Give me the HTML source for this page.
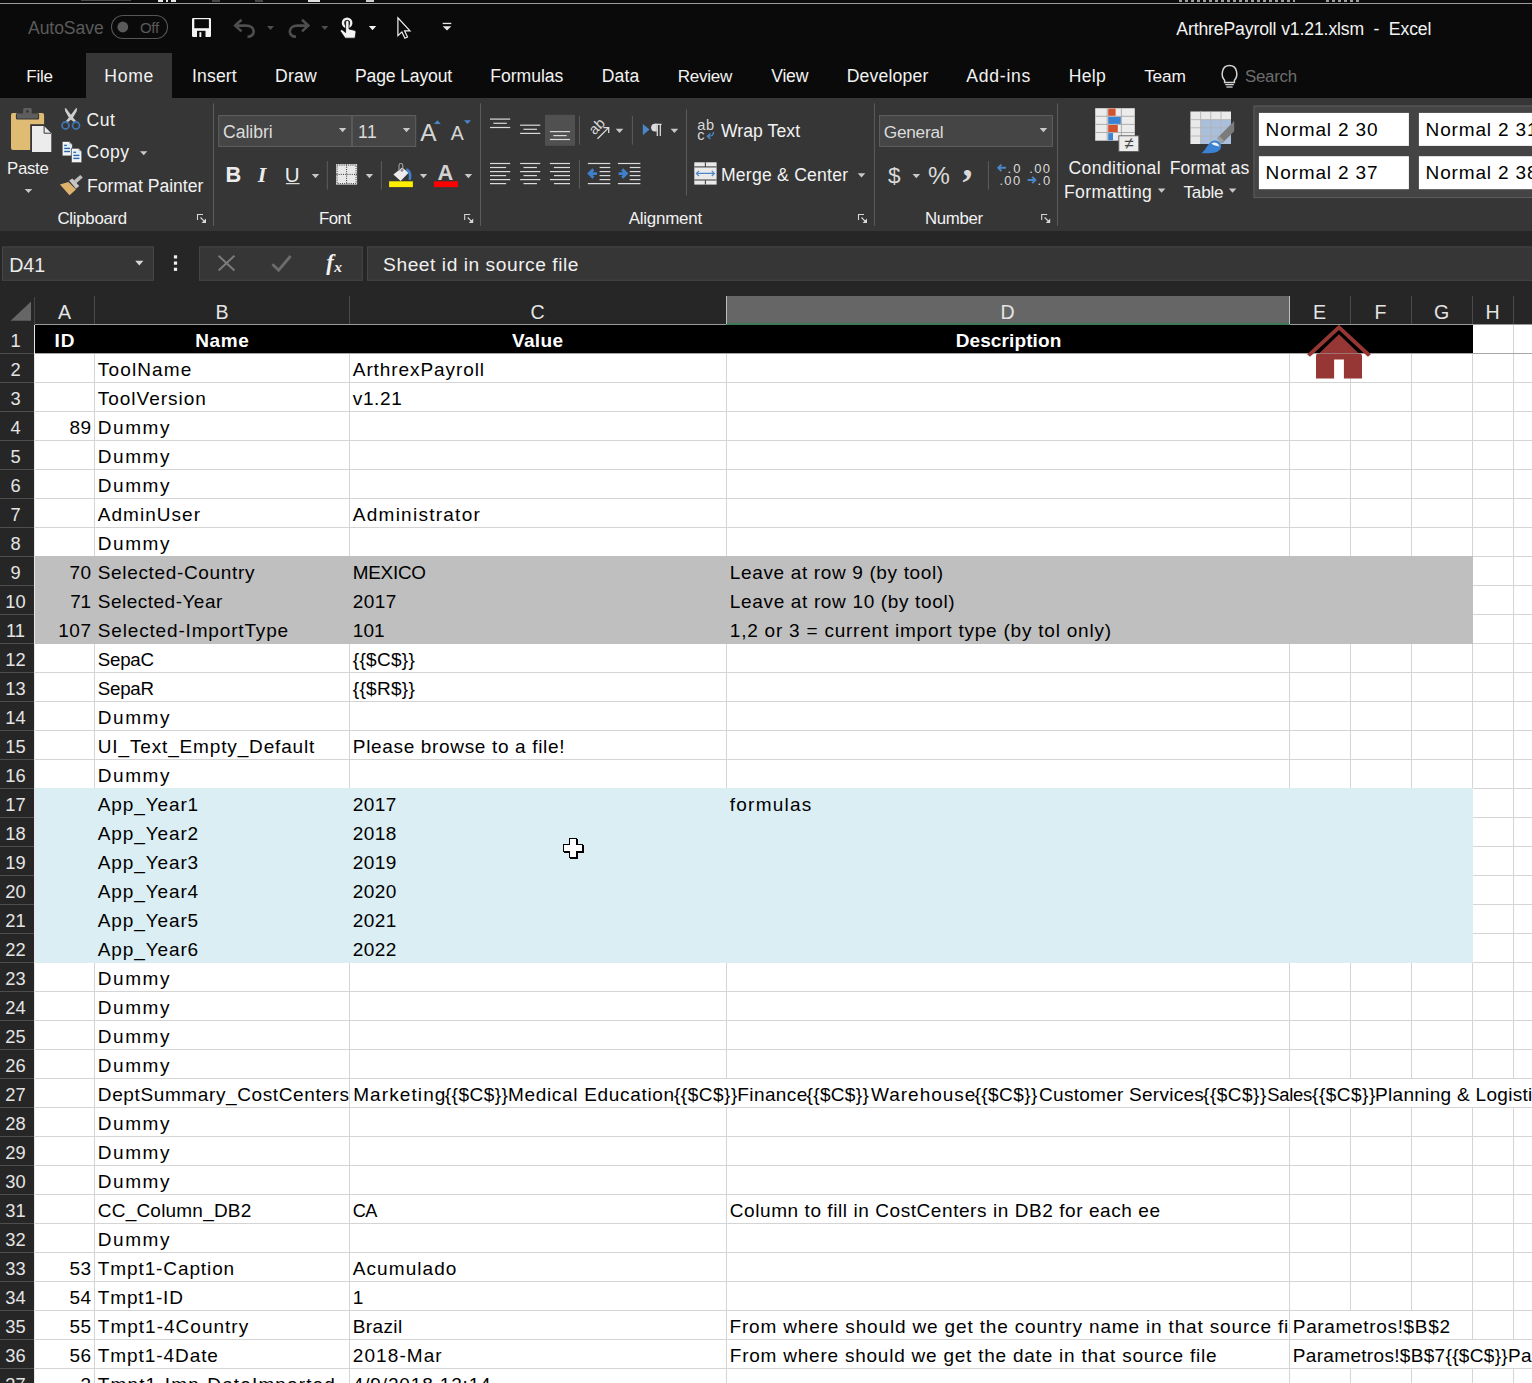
<!DOCTYPE html>
<html><head><meta charset="utf-8"><title>ArthrePayroll v1.21.xlsm - Excel</title>
<style>
html,body{margin:0;padding:0;background:#0a0a0a;}
body{width:1532px;height:1383px;overflow:hidden;position:relative;font-family:"Liberation Sans",sans-serif;}
#r{position:absolute;left:0;top:0;width:1532px;height:1383px;overflow:hidden;}
#r div,#r span,#r svg{position:absolute;}
#r span{white-space:pre;}
</style></head>
<body><div id="r">
<div style="left:0px;top:0px;width:1532px;height:3px;background:#0b0b0b;"></div>
<div style="left:0px;top:3px;width:1532px;height:1px;background:#9c9c9c;"></div>
<div style="left:1179px;top:0px;width:116px;height:2px;background:repeating-linear-gradient(90deg,#cfcfcf 0 3px,#0b0b0b 3px 6px);opacity:.75;"></div>
<div style="left:1326px;top:0px;width:36px;height:2px;background:repeating-linear-gradient(90deg,#cfcfcf 0 3px,#0b0b0b 3px 6px);opacity:.75;"></div>
<div style="left:81px;top:0px;width:50px;height:1px;background:#4a4a4a;"></div>
<div style="left:158px;top:0px;width:18px;height:2px;background:#e8e8e8;"></div>
<div style="left:163px;top:0px;width:3px;height:2px;background:#0b0b0b;"></div>
<div style="left:168px;top:0px;width:3px;height:2px;background:#0b0b0b;"></div>
<div style="left:212px;top:0px;width:8px;height:2px;background:#454545;"></div>
<div style="left:255px;top:0px;width:8px;height:2px;background:#454545;"></div>
<div style="left:308px;top:0px;width:12px;height:2px;background:#e0e0e0;"></div>
<div style="left:366px;top:0px;width:8px;height:2px;background:#d0d0d0;"></div>
<div style="left:0px;top:4px;width:1532px;height:94px;background:#0a0a0a;"></div>
<div style="left:86px;top:53px;width:86px;height:45px;background:#363636;"></div>
<div style="left:0px;top:98px;width:1532px;height:133px;background:#363636;"></div>
<div style="left:0px;top:231px;width:1532px;height:66px;background:#262626;"></div>
<div style="left:0px;top:297px;width:1532px;height:1086px;background:#262626;"></div>
<div style="left:35px;top:325px;width:1497px;height:1058px;background:#ffffff;"></div>
<div style="left:35px;top:353px;width:1497px;height:1px;background:#d4d4d4;"></div>
<div style="left:35px;top:382px;width:1497px;height:1px;background:#d4d4d4;"></div>
<div style="left:35px;top:411px;width:1497px;height:1px;background:#d4d4d4;"></div>
<div style="left:35px;top:440px;width:1497px;height:1px;background:#d4d4d4;"></div>
<div style="left:35px;top:469px;width:1497px;height:1px;background:#d4d4d4;"></div>
<div style="left:35px;top:498px;width:1497px;height:1px;background:#d4d4d4;"></div>
<div style="left:35px;top:527px;width:1497px;height:1px;background:#d4d4d4;"></div>
<div style="left:35px;top:556px;width:1497px;height:1px;background:#d4d4d4;"></div>
<div style="left:35px;top:585px;width:1497px;height:1px;background:#d4d4d4;"></div>
<div style="left:35px;top:614px;width:1497px;height:1px;background:#d4d4d4;"></div>
<div style="left:35px;top:643px;width:1497px;height:1px;background:#d4d4d4;"></div>
<div style="left:35px;top:672px;width:1497px;height:1px;background:#d4d4d4;"></div>
<div style="left:35px;top:701px;width:1497px;height:1px;background:#d4d4d4;"></div>
<div style="left:35px;top:730px;width:1497px;height:1px;background:#d4d4d4;"></div>
<div style="left:35px;top:759px;width:1497px;height:1px;background:#d4d4d4;"></div>
<div style="left:35px;top:788px;width:1497px;height:1px;background:#d4d4d4;"></div>
<div style="left:35px;top:817px;width:1497px;height:1px;background:#d4d4d4;"></div>
<div style="left:35px;top:846px;width:1497px;height:1px;background:#d4d4d4;"></div>
<div style="left:35px;top:875px;width:1497px;height:1px;background:#d4d4d4;"></div>
<div style="left:35px;top:904px;width:1497px;height:1px;background:#d4d4d4;"></div>
<div style="left:35px;top:933px;width:1497px;height:1px;background:#d4d4d4;"></div>
<div style="left:35px;top:962px;width:1497px;height:1px;background:#d4d4d4;"></div>
<div style="left:35px;top:991px;width:1497px;height:1px;background:#d4d4d4;"></div>
<div style="left:35px;top:1020px;width:1497px;height:1px;background:#d4d4d4;"></div>
<div style="left:35px;top:1049px;width:1497px;height:1px;background:#d4d4d4;"></div>
<div style="left:35px;top:1078px;width:1497px;height:1px;background:#d4d4d4;"></div>
<div style="left:35px;top:1107px;width:1497px;height:1px;background:#d4d4d4;"></div>
<div style="left:35px;top:1136px;width:1497px;height:1px;background:#d4d4d4;"></div>
<div style="left:35px;top:1165px;width:1497px;height:1px;background:#d4d4d4;"></div>
<div style="left:35px;top:1194px;width:1497px;height:1px;background:#d4d4d4;"></div>
<div style="left:35px;top:1223px;width:1497px;height:1px;background:#d4d4d4;"></div>
<div style="left:35px;top:1252px;width:1497px;height:1px;background:#d4d4d4;"></div>
<div style="left:35px;top:1281px;width:1497px;height:1px;background:#d4d4d4;"></div>
<div style="left:35px;top:1310px;width:1497px;height:1px;background:#d4d4d4;"></div>
<div style="left:35px;top:1339px;width:1497px;height:1px;background:#d4d4d4;"></div>
<div style="left:35px;top:1368px;width:1497px;height:1px;background:#d4d4d4;"></div>
<div style="left:94px;top:325px;width:1px;height:1058px;background:#d4d4d4;"></div>
<div style="left:349px;top:325px;width:1px;height:1058px;background:#d4d4d4;"></div>
<div style="left:726px;top:325px;width:1px;height:1058px;background:#d4d4d4;"></div>
<div style="left:1289px;top:325px;width:1px;height:1058px;background:#d4d4d4;"></div>
<div style="left:1350px;top:325px;width:1px;height:1058px;background:#d4d4d4;"></div>
<div style="left:1411px;top:325px;width:1px;height:1058px;background:#d4d4d4;"></div>
<div style="left:1472px;top:325px;width:1px;height:1058px;background:#d4d4d4;"></div>
<div style="left:1513px;top:325px;width:1px;height:1058px;background:#d4d4d4;"></div>
<div style="left:35px;top:353px;width:1497px;height:1px;background:#a6a6a6;"></div>
<div style="left:35px;top:325px;width:1438px;height:28px;background:#000000;"></div>
<div style="left:35px;top:556px;width:1438px;height:88px;background:#bfbfbf;"></div>
<div style="left:35px;top:788px;width:1438px;height:175px;background:#daeef3;"></div>
<div style="left:726px;top:1079px;width:806px;height:28px;background:#ffffff;"></div>
<div style="left:1350px;top:1311px;width:122px;height:28px;background:#ffffff;"></div>
<div style="left:1350px;top:1340px;width:182px;height:28px;background:#ffffff;"></div>
<div style="left:0px;top:297px;width:34px;height:1086px;background:#262626;"></div>
<div style="left:34px;top:325px;width:1px;height:1058px;background:#e6e6e6;"></div>
<div style="left:0px;top:353px;width:34px;height:1px;background:#4d4d4d;"></div>
<div style="left:0px;top:382px;width:34px;height:1px;background:#4d4d4d;"></div>
<div style="left:0px;top:411px;width:34px;height:1px;background:#4d4d4d;"></div>
<div style="left:0px;top:440px;width:34px;height:1px;background:#4d4d4d;"></div>
<div style="left:0px;top:469px;width:34px;height:1px;background:#4d4d4d;"></div>
<div style="left:0px;top:498px;width:34px;height:1px;background:#4d4d4d;"></div>
<div style="left:0px;top:527px;width:34px;height:1px;background:#4d4d4d;"></div>
<div style="left:0px;top:556px;width:34px;height:1px;background:#4d4d4d;"></div>
<div style="left:0px;top:585px;width:34px;height:1px;background:#4d4d4d;"></div>
<div style="left:0px;top:614px;width:34px;height:1px;background:#4d4d4d;"></div>
<div style="left:0px;top:643px;width:34px;height:1px;background:#4d4d4d;"></div>
<div style="left:0px;top:672px;width:34px;height:1px;background:#4d4d4d;"></div>
<div style="left:0px;top:701px;width:34px;height:1px;background:#4d4d4d;"></div>
<div style="left:0px;top:730px;width:34px;height:1px;background:#4d4d4d;"></div>
<div style="left:0px;top:759px;width:34px;height:1px;background:#4d4d4d;"></div>
<div style="left:0px;top:788px;width:34px;height:1px;background:#4d4d4d;"></div>
<div style="left:0px;top:817px;width:34px;height:1px;background:#4d4d4d;"></div>
<div style="left:0px;top:846px;width:34px;height:1px;background:#4d4d4d;"></div>
<div style="left:0px;top:875px;width:34px;height:1px;background:#4d4d4d;"></div>
<div style="left:0px;top:904px;width:34px;height:1px;background:#4d4d4d;"></div>
<div style="left:0px;top:933px;width:34px;height:1px;background:#4d4d4d;"></div>
<div style="left:0px;top:962px;width:34px;height:1px;background:#4d4d4d;"></div>
<div style="left:0px;top:991px;width:34px;height:1px;background:#4d4d4d;"></div>
<div style="left:0px;top:1020px;width:34px;height:1px;background:#4d4d4d;"></div>
<div style="left:0px;top:1049px;width:34px;height:1px;background:#4d4d4d;"></div>
<div style="left:0px;top:1078px;width:34px;height:1px;background:#4d4d4d;"></div>
<div style="left:0px;top:1107px;width:34px;height:1px;background:#4d4d4d;"></div>
<div style="left:0px;top:1136px;width:34px;height:1px;background:#4d4d4d;"></div>
<div style="left:0px;top:1165px;width:34px;height:1px;background:#4d4d4d;"></div>
<div style="left:0px;top:1194px;width:34px;height:1px;background:#4d4d4d;"></div>
<div style="left:0px;top:1223px;width:34px;height:1px;background:#4d4d4d;"></div>
<div style="left:0px;top:1252px;width:34px;height:1px;background:#4d4d4d;"></div>
<div style="left:0px;top:1281px;width:34px;height:1px;background:#4d4d4d;"></div>
<div style="left:0px;top:1310px;width:34px;height:1px;background:#4d4d4d;"></div>
<div style="left:0px;top:1339px;width:34px;height:1px;background:#4d4d4d;"></div>
<div style="left:0px;top:1368px;width:34px;height:1px;background:#4d4d4d;"></div>
<div style="left:726px;top:296px;width:563px;height:28px;background:#666666;"></div>
<div style="left:34px;top:324px;width:1498px;height:1px;background:#9b9b9b;"></div>
<div style="left:726px;top:323px;width:564px;height:2px;background:#3d7a57;"></div>
<div style="left:34px;top:297px;width:1px;height:28px;background:#444444;"></div>
<div style="left:94px;top:296px;width:1px;height:28px;background:#4a4a4a;"></div>
<div style="left:349px;top:296px;width:1px;height:28px;background:#4a4a4a;"></div>
<div style="left:726px;top:296px;width:1px;height:28px;background:#bdbdbd;"></div>
<div style="left:1289px;top:296px;width:1px;height:28px;background:#bdbdbd;"></div>
<div style="left:1350px;top:296px;width:1px;height:28px;background:#4a4a4a;"></div>
<div style="left:1411px;top:296px;width:1px;height:28px;background:#4a4a4a;"></div>
<div style="left:1472px;top:296px;width:1px;height:28px;background:#4a4a4a;"></div>
<div style="left:1513px;top:296px;width:1px;height:28px;background:#4a4a4a;"></div>
<svg style="left:0;top:0" width="1532" height="1383" viewBox="0 0 1532 1383"><rect x="111.5" y="15.5" width="56" height="23" rx="11.5" fill="none" stroke="#565656" stroke-width="1.1"/><circle cx="122.8" cy="27" r="5.4" fill="#5a5a5a" stroke="none" stroke-width="1"/><rect x="192" y="18" width="19" height="19" fill="#f4f4f4" rx="1.2"/><rect x="194.3" y="19.2" width="14.6" height="9" fill="#0a0a0a" /><rect x="197" y="30.8" width="8.5" height="6.2" fill="#0a0a0a" /><rect x="199.4" y="32.2" width="1.9" height="4.8" fill="#f4f4f4" /><path d="M241.5,19.8 L235.2,25.6 L241.5,31.4" fill="none" stroke="#4e4e4e" stroke-width="2.6" /><path d="M235.8,25.6 H246 C256,25.6 256,36.6 247.5,36.8" fill="none" stroke="#4e4e4e" stroke-width="2.6" /><polygon points="267,26 274,26 270.5,30" fill="#4e4e4e" /><path d="M302,19.8 L308.3,25.6 L302,31.4" fill="none" stroke="#4e4e4e" stroke-width="2.6" /><path d="M307.7,25.6 H297.5 C287.5,25.6 287.5,36.6 296,36.8" fill="none" stroke="#4e4e4e" stroke-width="2.6" /><polygon points="321.3,26 328.3,26 324.8,30" fill="#4e4e4e" /><circle cx="347.1" cy="22.9" r="4.1" fill="none" stroke="#f0f0f0" stroke-width="2.5"/><path d="M345.6,22 a1.7,1.7 0 0 1 3.4,0 V29 l5.2,1.2 c1.6,0.4 1.9,1.4 1.7,2.6 L355,38.2 H345.2 L340.6,31.6 c-0.8,-1.4 0.9,-2.6 2.2,-1.4 L345.6,32.6 Z" fill="#f4f4f4" stroke="#0a0a0a" stroke-width="0.8" /><polygon points="368.8,26.1 376.2,26.1 372.5,30.3" fill="#f4f4f4" /><path d="M397.9,17.8 V35.6 L401.9,31.9 L404.9,38.2 L407.5,37 L404.6,30.9 H410 Z" fill="#0a0a0a" stroke="#f4f4f4" stroke-width="1.2" /><rect x="442.7" y="22.8" width="8.6" height="1.3" fill="#e8e8e8" /><polygon points="442.7,26.2 451.3,26.2 447.0,30.6" fill="#e8e8e8" /><path d="M1224.6,80.2 C1220.6,76 1221.4,65.6 1229.5,65.6 C1237.6,65.6 1238.4,76 1234.4,80.2 V82.6 H1224.6 Z" fill="none" stroke="#d4d4d4" stroke-width="1.5" /><line x1="1225.2" y1="84.6" x2="1233.8" y2="84.6" stroke="#d4d4d4" stroke-width="1.3" stroke-linecap="butt"/><line x1="1226.4" y1="87" x2="1232.6" y2="87" stroke="#d4d4d4" stroke-width="1.3" stroke-linecap="butt"/><rect x="11" y="112.9" width="33.1" height="37.1" fill="#e0bb73" rx="2"/><rect x="15.9" y="112.9" width="23.2" height="6.6" fill="#363636" rx="1.5"/><rect x="23.1" y="108" width="8.7" height="7" fill="#5e5e5e" rx="1.6"/><path d="M17,113.4 H38 V116.9 a1.5,1.5 0 0 1 -1.5,1.5 H18.5 a1.5,1.5 0 0 1 -1.5,-1.5 Z" fill="#5e5e5e" stroke="none" stroke-width="1" /><circle cx="27.4" cy="111.4" r="1.4" fill="#363636" stroke="none" stroke-width="1"/><rect x="30.2" y="124.2" width="23" height="29.4" fill="#363636" /><path d="M32,126 H44.1 L51.3,133.2 V151.9 H32 Z" fill="#ececec" stroke="none" stroke-width="1" /><path d="M44.1,126 V133.2 H51.3" fill="none" stroke="#363636" stroke-width="1" /><polygon points="24.7,189 32.3,189 28.5,193" fill="#c8c8c8" /><path d="M64.8,108.1 L66.2,108.4 L72.6,117 L76,121 L74.2,122.2 L69.4,118.6 L65.2,111.2 Z" fill="#cdcdcd" stroke="none" stroke-width="1" /><path d="M77.1,108.1 L75.7,108.4 L69.3,117 L65.9,121 L67.7,122.2 L72.5,118.6 L76.7,111.2 Z" fill="#cdcdcd" stroke="none" stroke-width="1" /><circle cx="65.5" cy="125.5" r="3.5" fill="none" stroke="#3f73ad" stroke-width="1.8"/><circle cx="76" cy="125.5" r="3.5" fill="none" stroke="#3f73ad" stroke-width="1.8"/><path d="M62.2,141.4 H69.0 L72.4,144.8 V155.9 H62.2 Z" fill="#f4f4f4" stroke="#363636" stroke-width="0.7" /><path d="M69.0,141.4 V144.8 H72.4 Z" fill="#b9b9b9" stroke="none" stroke-width="1" /><rect x="63.800000000000004" y="144.0" width="6.999999999999999" height="8.899999999999995" fill="#dcecfb" /><line x1="64.2" y1="145.4" x2="66.8" y2="145.4" stroke="#2f64a0" stroke-width="1.3" stroke-linecap="butt"/><line x1="64.2" y1="148.4" x2="70.0" y2="148.4" stroke="#2f64a0" stroke-width="1.3" stroke-linecap="butt"/><line x1="64.2" y1="151.5" x2="70.0" y2="151.5" stroke="#2f64a0" stroke-width="1.3" stroke-linecap="butt"/><path d="M71.4,148.3 H78.4 L81.80000000000001,151.70000000000002 V162.70000000000002 H71.4 Z" fill="#f4f4f4" stroke="#363636" stroke-width="0.7" /><path d="M78.4,148.3 V151.70000000000002 H81.80000000000001 Z" fill="#b9b9b9" stroke="none" stroke-width="1" /><rect x="73.0" y="150.9" width="7.2" height="8.899999999999995" fill="#dcecfb" /><line x1="73.4" y1="152.3" x2="76.0" y2="152.3" stroke="#2f64a0" stroke-width="1.3" stroke-linecap="butt"/><line x1="73.4" y1="155.4" x2="79.4" y2="155.4" stroke="#2f64a0" stroke-width="1.3" stroke-linecap="butt"/><line x1="73.4" y1="158.4" x2="79.4" y2="158.4" stroke="#2f64a0" stroke-width="1.3" stroke-linecap="butt"/><polygon points="140,151.3 147.4,151.3 143.7,155.3" fill="#c8c8c8" /><path d="M59.9,184.4 L68.4,181.9 L76,189.5 L69.5,195.3 Z" fill="#ddb26c" stroke="none" stroke-width="1" /><path d="M69.1,180.5 L72.4,178.6 L79.2,185.9 L76,188.8 Z" fill="#c6c6c6" stroke="none" stroke-width="1" /><path d="M73.8,180.4 L80.3,175 L82.8,177.6 L76.4,183.2 Z" fill="#bdbdbd" stroke="none" stroke-width="1" /><path d="M197.5,220 V214.5 H203" fill="none" stroke="#d8d8d8" stroke-width="1.1" /><path d="M200.5,217.5 L205.3,222.3" fill="none" stroke="#d8d8d8" stroke-width="1.2" /><polygon points="206,218.6 206,223 201.6,223" fill="#d8d8d8" /><rect x="213.0" y="103.3" width="1" height="122.39999999999999" fill="#5c5c5c" /><rect x="218.7" y="115.6" width="133" height="30.8" fill="#454545" stroke="#606060" stroke-width="1"/><rect x="352.3" y="115.6" width="63.4" height="30.8" fill="#454545" stroke="#606060" stroke-width="1"/><polygon points="338.9,128 346.29999999999995,128 342.59999999999997,132.2" fill="#c8c8c8" /><polygon points="402.8,128 410.2,128 406.5,132.2" fill="#c8c8c8" /><polygon points="434,124 440.8,124 437.4,120.2" fill="#4a86c8" /><polygon points="464,120.2 471,120.2 467.5,124" fill="#4a86c8" /><rect x="285.9" y="183.1" width="13.7" height="1.1" fill="#ececec" /><polygon points="311.8,174 319.2,174 315.5,178.2" fill="#c8c8c8" /><rect x="326.8" y="161.2" width="1" height="28.5" fill="#5c5c5c" /><rect x="336.1" y="164.1" width="21" height="20.5" fill="#e8e8e8" /><g stroke="#363636" stroke-width="1" stroke-dasharray="1,1.2"><line x1="346.6" y1="164.6" x2="346.6" y2="184.4"/><line x1="336.4" y1="174.4" x2="357" y2="174.4"/><rect x="337.1" y="165.1" width="19" height="18.5" fill="none"/></g><polygon points="365.7,174 373.09999999999997,174 369.4,178.2" fill="#c8c8c8" /><rect x="380.9" y="161.2" width="1" height="28.5" fill="#5c5c5c" /><rect x="389.1" y="181.3" width="23.8" height="5.8" fill="#ffee00" /><path d="M393.4,174.5 L402.2,167.4 L408.6,172.8 L400.6,180.9 Z" fill="#ececec" stroke="none" stroke-width="1" /><path d="M399,171 V165.4 a1.9,1.9 0 0 1 3.8,0 V170.4" fill="none" stroke="#a0a0a0" stroke-width="1.1" /><circle cx="401.9" cy="170.4" r="1.3" fill="#8a8a8a" stroke="none" stroke-width="1"/><path d="M406.4,168.2 C410.8,169.4 412.4,174 410.9,180 L408.4,179.8 C409.4,175.8 408.9,172.8 406.2,170.8 Z" fill="#3f7fcb" stroke="none" stroke-width="1" /><polygon points="419.8,174 427.2,174 423.5,178.2" fill="#c8c8c8" /><rect x="433.9" y="181.3" width="24.1" height="5.8" fill="#ff0000" /><polygon points="464.6,174 472.20000000000005,174 468.40000000000003,178.2" fill="#c8c8c8" /><path d="M464.7,220 V214.5 H470.2" fill="none" stroke="#d8d8d8" stroke-width="1.1" /><path d="M467.7,217.5 L472.5,222.3" fill="none" stroke="#d8d8d8" stroke-width="1.2" /><polygon points="473.2,218.6 473.2,223 468.8,223" fill="#d8d8d8" /><rect x="480.0" y="103.3" width="1" height="122.39999999999999" fill="#5c5c5c" /><line x1="490" y1="119.1" x2="510.2" y2="119.1" stroke="#dadada" stroke-width="1.2" stroke-linecap="butt"/><line x1="493.3666666666667" y1="123.3" x2="506.8333333333333" y2="123.3" stroke="#dadada" stroke-width="1.2" stroke-linecap="butt"/><line x1="490" y1="127.5" x2="510.2" y2="127.5" stroke="#dadada" stroke-width="1.2" stroke-linecap="butt"/><line x1="520.1" y1="125.2" x2="540.3" y2="125.2" stroke="#dadada" stroke-width="1.2" stroke-linecap="butt"/><line x1="523.4666666666667" y1="129.3" x2="536.9333333333333" y2="129.3" stroke="#dadada" stroke-width="1.2" stroke-linecap="butt"/><line x1="520.1" y1="133.4" x2="540.3" y2="133.4" stroke="#dadada" stroke-width="1.2" stroke-linecap="butt"/><rect x="545" y="114.8" width="30" height="31" fill="#505050" /><line x1="549.9" y1="131.6" x2="570" y2="131.6" stroke="#dadada" stroke-width="1.2" stroke-linecap="butt"/><line x1="553.25" y1="135.6" x2="566.65" y2="135.6" stroke="#dadada" stroke-width="1.2" stroke-linecap="butt"/><line x1="549.9" y1="139.5" x2="570" y2="139.5" stroke="#dadada" stroke-width="1.2" stroke-linecap="butt"/><rect x="578.9" y="116" width="1" height="28.69999999999999" fill="#5c5c5c" /><path d="M597.5,138.8 L608.4,127.9 M603.4,127.6 H608.7 V132.9" fill="none" stroke="#dadada" stroke-width="1.3" /><polygon points="615.7,128.8 623.3000000000001,128.8 619.5,133.0" fill="#c8c8c8" /><rect x="631.9" y="116" width="1" height="28.69999999999999" fill="#5c5c5c" /><polygon points="642.8,123.9 649.6,129.6 642.8,135.3" fill="#4a86c8" /><path d="M654.6,124.3 H661.6 M657.3,124.2 V136 M660.3,124.2 V136" fill="none" stroke="#dadada" stroke-width="1.3" /><path d="M656.8,123.7 H655 a3.9,3.9 0 0 0 0,7.8 H656.8 Z" fill="#dadada" stroke="none" stroke-width="1" /><polygon points="670.6,128.8 678.2,128.8 674.4,133.0" fill="#c8c8c8" /><rect x="686.0" y="109.3" width="1" height="86.2" fill="#5c5c5c" /><line x1="490" y1="163.5" x2="510.2" y2="163.5" stroke="#dadada" stroke-width="1.2" stroke-linecap="butt"/><line x1="490" y1="167.5" x2="506.15999999999997" y2="167.5" stroke="#dadada" stroke-width="1.2" stroke-linecap="butt"/><line x1="490" y1="171.6" x2="510.2" y2="171.6" stroke="#dadada" stroke-width="1.2" stroke-linecap="butt"/><line x1="490" y1="175.6" x2="506.15999999999997" y2="175.6" stroke="#dadada" stroke-width="1.2" stroke-linecap="butt"/><line x1="490" y1="179.6" x2="510.2" y2="179.6" stroke="#dadada" stroke-width="1.2" stroke-linecap="butt"/><line x1="490" y1="183.6" x2="506.15999999999997" y2="183.6" stroke="#dadada" stroke-width="1.2" stroke-linecap="butt"/><line x1="520.1" y1="163.5" x2="540.3" y2="163.5" stroke="#dadada" stroke-width="1.2" stroke-linecap="butt"/><line x1="523.4666666666667" y1="167.5" x2="536.9333333333333" y2="167.5" stroke="#dadada" stroke-width="1.2" stroke-linecap="butt"/><line x1="520.1" y1="171.6" x2="540.3" y2="171.6" stroke="#dadada" stroke-width="1.2" stroke-linecap="butt"/><line x1="523.4666666666667" y1="175.6" x2="536.9333333333333" y2="175.6" stroke="#dadada" stroke-width="1.2" stroke-linecap="butt"/><line x1="520.1" y1="179.6" x2="540.3" y2="179.6" stroke="#dadada" stroke-width="1.2" stroke-linecap="butt"/><line x1="523.4666666666667" y1="183.6" x2="536.9333333333333" y2="183.6" stroke="#dadada" stroke-width="1.2" stroke-linecap="butt"/><line x1="549.9" y1="163.5" x2="570" y2="163.5" stroke="#dadada" stroke-width="1.2" stroke-linecap="butt"/><line x1="553.92" y1="167.5" x2="570" y2="167.5" stroke="#dadada" stroke-width="1.2" stroke-linecap="butt"/><line x1="549.9" y1="171.6" x2="570" y2="171.6" stroke="#dadada" stroke-width="1.2" stroke-linecap="butt"/><line x1="553.92" y1="175.6" x2="570" y2="175.6" stroke="#dadada" stroke-width="1.2" stroke-linecap="butt"/><line x1="549.9" y1="179.6" x2="570" y2="179.6" stroke="#dadada" stroke-width="1.2" stroke-linecap="butt"/><line x1="553.92" y1="183.6" x2="570" y2="183.6" stroke="#dadada" stroke-width="1.2" stroke-linecap="butt"/><rect x="578.9" y="159.9" width="1" height="28.69999999999999" fill="#5c5c5c" /><line x1="587.8" y1="163.5" x2="610.3" y2="163.5" stroke="#dadada" stroke-width="1.2" stroke-linecap="butt"/><line x1="587.8" y1="183.6" x2="610.3" y2="183.6" stroke="#dadada" stroke-width="1.2" stroke-linecap="butt"/><line x1="599.6" y1="167.5" x2="610.3" y2="167.5" stroke="#dadada" stroke-width="1.2" stroke-linecap="butt"/><line x1="599.6" y1="171.6" x2="610.3" y2="171.6" stroke="#dadada" stroke-width="1.2" stroke-linecap="butt"/><line x1="599.6" y1="175.6" x2="610.3" y2="175.6" stroke="#dadada" stroke-width="1.2" stroke-linecap="butt"/><line x1="599.6" y1="179.6" x2="610.3" y2="179.6" stroke="#dadada" stroke-width="1.2" stroke-linecap="butt"/><path d="M597,173.6 H590 M593.4,169.4 L589.2,173.6 L593.4,177.8" fill="none" stroke="#3f7fcb" stroke-width="2.9" /><line x1="617.9" y1="163.5" x2="640.4" y2="163.5" stroke="#dadada" stroke-width="1.2" stroke-linecap="butt"/><line x1="617.9" y1="183.6" x2="640.4" y2="183.6" stroke="#dadada" stroke-width="1.2" stroke-linecap="butt"/><line x1="629.7" y1="167.5" x2="640.4" y2="167.5" stroke="#dadada" stroke-width="1.2" stroke-linecap="butt"/><line x1="629.7" y1="171.6" x2="640.4" y2="171.6" stroke="#dadada" stroke-width="1.2" stroke-linecap="butt"/><line x1="629.7" y1="175.6" x2="640.4" y2="175.6" stroke="#dadada" stroke-width="1.2" stroke-linecap="butt"/><line x1="629.7" y1="179.6" x2="640.4" y2="179.6" stroke="#dadada" stroke-width="1.2" stroke-linecap="butt"/><path d="M618.6,173.6 H625.6 M622.2,169.4 L626.4,173.6 L622.2,177.8" fill="none" stroke="#3f7fcb" stroke-width="2.9" /><path d="M713.4,132 C713.8,135 712,136.2 707.8,136.2 M710.4,133.4 L707.4,136.2 L710.4,139" fill="none" stroke="#4a86c8" stroke-width="1.4" /><rect x="694.3" y="162.3" width="22.3" height="22.3" fill="#eaeaea" /><g stroke="#454545" stroke-width="1.1"><line x1="694.3" y1="166.9" x2="716.6" y2="166.9"/><line x1="694.3" y1="180" x2="716.6" y2="180"/><line x1="705.4" y1="162.3" x2="705.4" y2="166.9"/><line x1="705.4" y1="180" x2="705.4" y2="184.6"/></g><path d="M696.4,173.4 H714.4 M699,170.8 L696.4,173.4 L699,176 M711.8,170.8 L714.4,173.4 L711.8,176" fill="none" stroke="#4a86c8" stroke-width="1.2" /><polygon points="857.7,173.2 865.3000000000001,173.2 861.5,177.39999999999998" fill="#c8c8c8" /><path d="M858.5,220 V214.5 H864" fill="none" stroke="#d8d8d8" stroke-width="1.1" /><path d="M861.5,217.5 L866.3,222.3" fill="none" stroke="#d8d8d8" stroke-width="1.2" /><polygon points="867,218.6 867,223 862.6,223" fill="#d8d8d8" /><rect x="873.9" y="103.3" width="1" height="122.39999999999999" fill="#5c5c5c" /><rect x="879.6" y="115.6" width="172.8" height="30.8" fill="#454545" stroke="#606060" stroke-width="1"/><polygon points="1039.6,128 1047.1999999999998,128 1043.3999999999999,132.2" fill="#c8c8c8" /><polygon points="912.5,174 920.1,174 916.3,178.2" fill="#c8c8c8" /><rect x="987.9" y="161.2" width="1" height="28.5" fill="#5c5c5c" /><path d="M1006,167.8 H998.4 M1001.4,164.6 L998.2,167.8 L1001.4,171" fill="none" stroke="#4a86c8" stroke-width="1.9" /><path d="M1027.6,180 H1035.2 M1032.2,176.8 L1035.4,180 L1032.2,183.2" fill="none" stroke="#4a86c8" stroke-width="1.9" /><path d="M1041.7,220 V214.5 H1047.2" fill="none" stroke="#d8d8d8" stroke-width="1.1" /><path d="M1044.7,217.5 L1049.5,222.3" fill="none" stroke="#d8d8d8" stroke-width="1.2" /><polygon points="1050.2,218.6 1050.2,223 1045.8,223" fill="#d8d8d8" /><rect x="1057.0" y="103.3" width="1" height="122.39999999999999" fill="#5c5c5c" /><rect x="1095.2" y="108.2" width="39.6" height="32.5" fill="#ececec" /><g stroke="#a6a6a6" stroke-width="0.9"><line x1="1107.2" y1="108.2" x2="1107.2" y2="140.7"/><line x1="1121.4" y1="108.2" x2="1121.4" y2="140.7"/><line x1="1095.2" y1="116.3" x2="1134.8" y2="116.3"/><line x1="1095.2" y1="124.4" x2="1134.8" y2="124.4"/><line x1="1095.2" y1="132.5" x2="1134.8" y2="132.5"/></g><rect x="1108.2" y="108.6" width="7.4" height="7.2" fill="#d2522e" /><rect x="1108.2" y="116.9" width="12.6" height="7" fill="#3c82d2" /><rect x="1108.2" y="125" width="9.6" height="7" fill="#d2522e" /><rect x="1108.2" y="133.1" width="4.8" height="7.2" fill="#3c82d2" /><rect x="1118.8" y="135.8" width="20" height="15.8" fill="#ececec" stroke="#5a5a5a" stroke-width="0.9"/><polygon points="1157.8,188.6 1165.3999999999999,188.6 1161.6,192.79999999999998" fill="#c8c8c8" /><rect x="1190.4" y="111.5" width="40.6" height="32.5" fill="#e9e9e9" /><rect x="1200.8" y="119.8" width="30.2" height="24.2" fill="#a9bfdb" /><g stroke="#b4b4b4" stroke-width="0.9"><line x1="1200.6" y1="111.5" x2="1200.6" y2="144"/><line x1="1210.8" y1="111.5" x2="1210.8" y2="144"/><line x1="1221" y1="111.5" x2="1221" y2="144"/><line x1="1190.4" y1="119.6" x2="1231" y2="119.6"/><line x1="1190.4" y1="127.8" x2="1231" y2="127.8"/><line x1="1190.4" y1="136" x2="1231" y2="136"/></g><path d="M1234.2,121 L1234.2,131.2 L1222.4,143 L1217.4,138 Z" fill="#7b7b7b" stroke="none" stroke-width="1" /><path d="M1219.8,136.4 L1224,140.8 L1221.4,143.4 L1217.2,139 Z" fill="#9d9d9d" stroke="none" stroke-width="1" /><path d="M1201.6,153.2 C1206.6,149.6 1207.4,142.6 1213.6,140.6 C1218.6,139.4 1222.4,143.6 1220.8,148 C1219.2,152.6 1212.6,153.6 1201.6,153.2 Z" fill="#3c82d2" stroke="none" stroke-width="1" /><path d="M1211.4,143.4 C1214.6,141.4 1218.4,142.6 1219.4,146.4 C1216.4,145.8 1213.4,145.4 1211.4,143.4 Z" fill="#f2f2f2" stroke="none" stroke-width="1" /><polygon points="1228.8,188.6 1236.3999999999999,188.6 1232.6,192.79999999999998" fill="#c8c8c8" /><rect x="1253.9" y="106" width="300" height="91.6" fill="#444444" stroke="#5e5e5e" stroke-width="1"/><rect x="1258.9" y="112.9" width="150" height="33" fill="#ffffff" /><rect x="1418.9" y="112.9" width="150" height="33" fill="#ffffff" /><rect x="1258.9" y="156.2" width="150" height="33" fill="#ffffff" /><rect x="1418.9" y="156.2" width="150" height="33" fill="#ffffff" /><rect x="2.5" y="246.9" width="151" height="33.4" fill="#363636" stroke="#464646" stroke-width="1"/><rect x="199.5" y="246.9" width="162.8" height="33.4" fill="#363636" stroke="#464646" stroke-width="1"/><rect x="367.5" y="246.9" width="1200" height="33.4" fill="#363636" stroke="#464646" stroke-width="1"/><polygon points="135.2,260.8 143.39999999999998,260.8 139.29999999999998,265.40000000000003" fill="#d8d8d8" /><rect x="173.9" y="255.29999999999998" width="3.2" height="3.2" fill="#f0f0f0" /><rect x="173.9" y="261.5" width="3.2" height="3.2" fill="#f0f0f0" /><rect x="173.9" y="267.7" width="3.2" height="3.2" fill="#f0f0f0" /><path d="M218.6,255.8 L234.4,270.6 M234.4,255.8 L218.6,270.6" fill="none" stroke="#7a7a7a" stroke-width="2" /><path d="M272.4,264.2 L278.6,270.2 L290.6,256" fill="none" stroke="#6c6c6c" stroke-width="2.8" /><polygon points="31,301.5 31,320.8 10.6,320.8" fill="#666666" /><polygon points="1307.1,354.2 1338.96,324.8 1370.9,354.2 1368,356.8 1365.1,354.2 1338.96,329.9 1312.8,354.2 1309.9,356.8" fill="#963735" /><polygon points="1338.96,334.3 1358.6,353.2 1319.3,353.2" fill="#963735" /><path d="M1316,355.8 a2,2 0 0 1 2,-2 H1360 a2,2 0 0 1 2,2 V378.6 H1343.9 V359.4 H1334.1 V378.6 H1316 Z" fill="#963735" stroke="none" stroke-width="1" /><path d="M569,838 H577 V839 H578 V844 H583 V845 H584 V853 H578 V859 H570 V858 H569 V853 H564 V852 H563 V844 H569 Z" fill="#000" stroke="none" stroke-width="1" /><path d="M570,839 H576 V845 H582 V851 H576 V857 H570 V851 H564 V845 H570 Z" fill="#fff" stroke="none" stroke-width="1" /></svg>
<span style="top:18.1px;font-size:17.6px;line-height:21px;color:#5a5a5a;left:28.0px;letter-spacing:-0.085px;">AutoSave</span>
<span style="top:17.8px;font-size:15.5px;line-height:19px;color:#5a5a5a;left:139.89999999999998px;font-size:14.98px;top:17.8px;letter-spacing:-0.250px;">Off</span>
<span style="top:19.1px;font-size:17.6px;line-height:21px;color:#f2f2f2;left:1176.3px;letter-spacing:-0.121px;">ArthrePayroll v1.21.xlsm  -  Excel</span>
<span style="top:66.1px;font-size:17.6px;line-height:21px;color:#f2f2f2;left:26.3px;font-size:17.04px;top:66.1px;letter-spacing:-0.250px;">File</span>
<span style="top:66.1px;font-size:17.6px;line-height:21px;color:#f2f2f2;left:104.2px;letter-spacing:0.754px;">Home</span>
<span style="top:66.1px;font-size:17.6px;line-height:21px;color:#f2f2f2;left:192.0px;letter-spacing:0.137px;">Insert</span>
<span style="top:66.1px;font-size:17.6px;line-height:21px;color:#f2f2f2;left:275.09999999999997px;letter-spacing:0.213px;">Draw</span>
<span style="top:66.1px;font-size:17.6px;line-height:21px;color:#f2f2f2;left:355.0px;letter-spacing:-0.161px;">Page Layout</span>
<span style="top:66.1px;font-size:17.6px;line-height:21px;color:#f2f2f2;left:490.2px;letter-spacing:-0.018px;">Formulas</span>
<span style="top:66.1px;font-size:17.6px;line-height:21px;color:#f2f2f2;left:601.7px;letter-spacing:0.176px;">Data</span>
<span style="top:66.1px;font-size:17.6px;line-height:21px;color:#f2f2f2;left:677.7px;font-size:17.07px;top:66.1px;letter-spacing:-0.250px;">Review</span>
<span style="top:66.1px;font-size:17.6px;line-height:21px;color:#f2f2f2;left:771.2px;letter-spacing:-0.209px;">View</span>
<span style="top:66.1px;font-size:17.6px;line-height:21px;color:#f2f2f2;left:846.7px;letter-spacing:0.187px;">Developer</span>
<span style="top:66.1px;font-size:17.6px;line-height:21px;color:#f2f2f2;left:966.2px;letter-spacing:0.757px;">Add-ins</span>
<span style="top:66.1px;font-size:17.6px;line-height:21px;color:#f2f2f2;left:1068.7px;letter-spacing:0.338px;">Help</span>
<span style="top:66.1px;font-size:17.6px;line-height:21px;color:#f2f2f2;left:1144.2px;font-size:17.36px;top:66.1px;letter-spacing:-0.250px;">Team</span>
<span style="top:66.1px;font-size:17.6px;line-height:21px;color:#6e6e6e;left:1245.0px;font-size:16.87px;top:66.1px;letter-spacing:-0.250px;">Search</span>
<span style="top:157.9px;font-size:17.6px;line-height:21px;color:#f2f2f2;left:7.1000000000000005px;font-size:16.81px;top:157.9px;letter-spacing:-0.319px;">Paste</span>
<span style="top:109.7px;font-size:17.6px;line-height:21px;color:#f2f2f2;left:86.5px;letter-spacing:0.455px;">Cut</span>
<span style="top:142.4px;font-size:17.6px;line-height:21px;color:#f2f2f2;left:86.5px;letter-spacing:0.474px;">Copy</span>
<span style="top:175.8px;font-size:17.6px;line-height:21px;color:#f2f2f2;left:87.10000000000001px;letter-spacing:-0.005px;">Format Painter</span>
<span style="top:207.6px;font-size:17.6px;line-height:21px;color:#f2f2f2;left:57.5px;font-size:16.81px;top:207.6px;letter-spacing:-0.278px;">Clipboard</span>
<span style="top:122.3px;font-size:17.6px;line-height:21px;color:#dcdcdc;left:223.0px;letter-spacing:-0.029px;">Calibri</span>
<span style="top:122.3px;font-size:17.6px;line-height:21px;color:#dcdcdc;left:358.09999999999997px;letter-spacing:0.434px;">11</span>
<span style="top:117.6px;font-size:24.5px;line-height:29px;color:#d6d6d6;left:420.2px;letter-spacing:2.856px;">A</span>
<span style="top:122.3px;font-size:19.5px;line-height:23px;color:#d6d6d6;left:450.8px;letter-spacing:3.184px;">A</span>
<span style="top:162.0px;font-size:21.8px;line-height:26px;color:#ececec;font-weight:700;left:225.6px;letter-spacing:0.450px;">B</span>
<span style="top:162.0px;font-size:22px;line-height:26px;color:#ececec;font-weight:700;font-style:italic;left:257.8px;font-family:'Liberation Serif',serif;">I</span>
<span style="top:162.1px;font-size:20.6px;line-height:25px;color:#ececec;left:284.8px;letter-spacing:2.325px;">U</span>
<span style="top:160.3px;font-size:21.8px;line-height:26px;color:#d2d2d2;font-weight:700;left:437.4px;">A</span>
<span style="top:207.6px;font-size:17.6px;line-height:21px;color:#f2f2f2;left:319.0px;font-size:16.81px;top:207.6px;letter-spacing:-0.511px;">Font</span>
<span style="top:-12.8px;font-size:14.5px;line-height:17px;color:#dadada;left:0px;transform:translateX(-50%);left:585.8px;top:126.8px;transform:rotate(-45deg);transform-origin:0 0;line-height:15px;">ab</span>
<span style="top:115.5px;font-size:14.6px;line-height:18px;color:#dadada;left:697.2px;letter-spacing:0.766px;">ab</span>
<span style="top:125.8px;font-size:14.6px;line-height:18px;color:#dadada;left:697.2px;">c</span>
<span style="top:120.9px;font-size:17.6px;line-height:21px;color:#f2f2f2;left:720.9000000000001px;letter-spacing:0.080px;">Wrap Text</span>
<span style="top:165.1px;font-size:17.6px;line-height:21px;color:#f2f2f2;left:720.9000000000001px;letter-spacing:0.232px;">Merge &amp; Center</span>
<span style="top:207.6px;font-size:17.6px;line-height:21px;color:#f2f2f2;left:628.7px;font-size:16.98px;top:207.6px;letter-spacing:-0.250px;">Alignment</span>
<span style="top:122.3px;font-size:17.6px;line-height:21px;color:#dcdcdc;left:883.7px;font-size:17.29px;top:122.3px;letter-spacing:-0.250px;">General</span>
<span style="top:161.6px;font-size:22.5px;line-height:27px;color:#dadada;left:888px;">$</span>
<span style="top:160.6px;font-size:24.6px;line-height:30px;color:#dadada;left:928px;letter-spacing:1.325px;">%</span>
<span style="top:139.0px;font-size:40px;line-height:48px;color:#dadada;font-weight:700;left:962.6px;font-family:'Liberation Serif',serif;">,</span>
<span style="top:160.6px;font-size:13px;line-height:16px;color:#dadada;left:1007.6px;letter-spacing:1.956px;">.0</span>
<span style="top:172.8px;font-size:13px;line-height:16px;color:#dadada;left:999.4px;letter-spacing:1.361px;">.00</span>
<span style="top:160.6px;font-size:13px;line-height:16px;color:#dadada;left:1029.2px;letter-spacing:1.361px;">.00</span>
<span style="top:172.8px;font-size:13px;line-height:16px;color:#dadada;left:1037.4px;letter-spacing:1.956px;">.0</span>
<span style="top:207.6px;font-size:17.6px;line-height:21px;color:#f2f2f2;left:924.9000000000001px;font-size:16.81px;top:207.6px;letter-spacing:-0.292px;">Number</span>
<span style="top:134.4px;font-size:17px;line-height:20px;color:#444;left:1128.8px;transform:translateX(-50%);">≠</span>
<span style="top:157.8px;font-size:17.6px;line-height:21px;color:#f2f2f2;left:1068.4px;letter-spacing:0.417px;">Conditional</span>
<span style="top:181.6px;font-size:17.6px;line-height:21px;color:#f2f2f2;left:1063.9px;letter-spacing:0.434px;">Formatting</span>
<span style="top:157.8px;font-size:17.6px;line-height:21px;color:#f2f2f2;left:1169.8px;letter-spacing:0.025px;">Format as</span>
<span style="top:181.6px;font-size:17.6px;line-height:21px;color:#f2f2f2;left:1183.5px;font-size:17.20px;top:181.6px;letter-spacing:-0.250px;">Table</span>
<span style="top:117.6px;font-size:19px;line-height:23px;color:#000;left:1265.6px;letter-spacing:0.850px;">Normal 2 30</span>
<span style="top:117.6px;font-size:19px;line-height:23px;color:#000;left:1425.6px;letter-spacing:0.850px;">Normal 2 31</span>
<span style="top:160.8px;font-size:19px;line-height:23px;color:#000;left:1265.6px;letter-spacing:0.850px;">Normal 2 37</span>
<span style="top:160.8px;font-size:19px;line-height:23px;color:#000;left:1425.6px;letter-spacing:0.850px;">Normal 2 38</span>
<span style="top:252.5px;font-size:19.7px;line-height:24px;color:#eaeaea;left:9.299999999999999px;letter-spacing:-0.162px;">D41</span>
<span style="top:249.4px;font-size:22.5px;line-height:27px;color:#f2f2f2;font-weight:700;font-style:italic;left:326.2px;font-family:'Liberation Serif',serif;">f</span>
<span style="top:257.4px;font-size:15.5px;line-height:19px;color:#f2f2f2;font-weight:700;font-style:italic;left:334.2px;font-family:'Liberation Serif',serif;">x</span>
<span style="top:252.7px;font-size:19.2px;line-height:23px;color:#f0f0f0;left:383.09999999999997px;letter-spacing:0.543px;">Sheet id in source file</span>
<span style="top:329.7px;font-size:18.3px;line-height:22px;color:#e4e4e4;left:15.5px;transform:translateX(-50%);">1</span>
<span style="top:358.7px;font-size:18.3px;line-height:22px;color:#e4e4e4;left:15.5px;transform:translateX(-50%);">2</span>
<span style="top:387.7px;font-size:18.3px;line-height:22px;color:#e4e4e4;left:15.5px;transform:translateX(-50%);">3</span>
<span style="top:416.7px;font-size:18.3px;line-height:22px;color:#e4e4e4;left:15.5px;transform:translateX(-50%);">4</span>
<span style="top:445.7px;font-size:18.3px;line-height:22px;color:#e4e4e4;left:15.5px;transform:translateX(-50%);">5</span>
<span style="top:474.7px;font-size:18.3px;line-height:22px;color:#e4e4e4;left:15.5px;transform:translateX(-50%);">6</span>
<span style="top:503.7px;font-size:18.3px;line-height:22px;color:#e4e4e4;left:15.5px;transform:translateX(-50%);">7</span>
<span style="top:532.7px;font-size:18.3px;line-height:22px;color:#e4e4e4;left:15.5px;transform:translateX(-50%);">8</span>
<span style="top:561.7px;font-size:18.3px;line-height:22px;color:#e4e4e4;left:15.5px;transform:translateX(-50%);">9</span>
<span style="top:590.7px;font-size:18.3px;line-height:22px;color:#e4e4e4;left:15.5px;transform:translateX(-50%);">10</span>
<span style="top:619.7px;font-size:18.3px;line-height:22px;color:#e4e4e4;left:15.5px;transform:translateX(-50%);">11</span>
<span style="top:648.7px;font-size:18.3px;line-height:22px;color:#e4e4e4;left:15.5px;transform:translateX(-50%);">12</span>
<span style="top:677.7px;font-size:18.3px;line-height:22px;color:#e4e4e4;left:15.5px;transform:translateX(-50%);">13</span>
<span style="top:706.7px;font-size:18.3px;line-height:22px;color:#e4e4e4;left:15.5px;transform:translateX(-50%);">14</span>
<span style="top:735.7px;font-size:18.3px;line-height:22px;color:#e4e4e4;left:15.5px;transform:translateX(-50%);">15</span>
<span style="top:764.7px;font-size:18.3px;line-height:22px;color:#e4e4e4;left:15.5px;transform:translateX(-50%);">16</span>
<span style="top:793.7px;font-size:18.3px;line-height:22px;color:#e4e4e4;left:15.5px;transform:translateX(-50%);">17</span>
<span style="top:822.7px;font-size:18.3px;line-height:22px;color:#e4e4e4;left:15.5px;transform:translateX(-50%);">18</span>
<span style="top:851.7px;font-size:18.3px;line-height:22px;color:#e4e4e4;left:15.5px;transform:translateX(-50%);">19</span>
<span style="top:880.7px;font-size:18.3px;line-height:22px;color:#e4e4e4;left:15.5px;transform:translateX(-50%);">20</span>
<span style="top:909.7px;font-size:18.3px;line-height:22px;color:#e4e4e4;left:15.5px;transform:translateX(-50%);">21</span>
<span style="top:938.7px;font-size:18.3px;line-height:22px;color:#e4e4e4;left:15.5px;transform:translateX(-50%);">22</span>
<span style="top:967.7px;font-size:18.3px;line-height:22px;color:#e4e4e4;left:15.5px;transform:translateX(-50%);">23</span>
<span style="top:996.7px;font-size:18.3px;line-height:22px;color:#e4e4e4;left:15.5px;transform:translateX(-50%);">24</span>
<span style="top:1025.7px;font-size:18.3px;line-height:22px;color:#e4e4e4;left:15.5px;transform:translateX(-50%);">25</span>
<span style="top:1054.7px;font-size:18.3px;line-height:22px;color:#e4e4e4;left:15.5px;transform:translateX(-50%);">26</span>
<span style="top:1083.7px;font-size:18.3px;line-height:22px;color:#e4e4e4;left:15.5px;transform:translateX(-50%);">27</span>
<span style="top:1112.7px;font-size:18.3px;line-height:22px;color:#e4e4e4;left:15.5px;transform:translateX(-50%);">28</span>
<span style="top:1141.7px;font-size:18.3px;line-height:22px;color:#e4e4e4;left:15.5px;transform:translateX(-50%);">29</span>
<span style="top:1170.7px;font-size:18.3px;line-height:22px;color:#e4e4e4;left:15.5px;transform:translateX(-50%);">30</span>
<span style="top:1199.7px;font-size:18.3px;line-height:22px;color:#e4e4e4;left:15.5px;transform:translateX(-50%);">31</span>
<span style="top:1228.7px;font-size:18.3px;line-height:22px;color:#e4e4e4;left:15.5px;transform:translateX(-50%);">32</span>
<span style="top:1257.7px;font-size:18.3px;line-height:22px;color:#e4e4e4;left:15.5px;transform:translateX(-50%);">33</span>
<span style="top:1286.7px;font-size:18.3px;line-height:22px;color:#e4e4e4;left:15.5px;transform:translateX(-50%);">34</span>
<span style="top:1315.7px;font-size:18.3px;line-height:22px;color:#e4e4e4;left:15.5px;transform:translateX(-50%);">35</span>
<span style="top:1344.7px;font-size:18.3px;line-height:22px;color:#e4e4e4;left:15.5px;transform:translateX(-50%);">36</span>
<span style="top:1373.7px;font-size:18.3px;line-height:22px;color:#e4e4e4;left:15.5px;transform:translateX(-50%);">37</span>
<span style="top:299.6px;font-size:19.6px;line-height:24px;color:#e4e4e4;left:64.5px;transform:translateX(-50%);">A</span>
<span style="top:299.6px;font-size:19.6px;line-height:24px;color:#e4e4e4;left:222px;transform:translateX(-50%);">B</span>
<span style="top:299.6px;font-size:19.6px;line-height:24px;color:#e4e4e4;left:537.5px;transform:translateX(-50%);">C</span>
<span style="top:299.6px;font-size:19.6px;line-height:24px;color:#e4e4e4;left:1007.5px;transform:translateX(-50%);">D</span>
<span style="top:299.6px;font-size:19.6px;line-height:24px;color:#e4e4e4;left:1319.5px;transform:translateX(-50%);">E</span>
<span style="top:299.6px;font-size:19.6px;line-height:24px;color:#e4e4e4;left:1380.5px;transform:translateX(-50%);">F</span>
<span style="top:299.6px;font-size:19.6px;line-height:24px;color:#e4e4e4;left:1441.5px;transform:translateX(-50%);">G</span>
<span style="top:299.6px;font-size:19.6px;line-height:24px;color:#e4e4e4;left:1492.5px;transform:translateX(-50%);">H</span>
<span style="top:328.9px;font-size:19px;line-height:23px;color:#fff;font-weight:700;left:64.5px;transform:translateX(-50%);letter-spacing:1.200px;margin-left:0.600px;">ID</span>
<span style="top:328.9px;font-size:19px;line-height:23px;color:#fff;font-weight:700;left:222px;transform:translateX(-50%);letter-spacing:0.650px;margin-left:0.325px;">Name</span>
<span style="top:328.9px;font-size:19px;line-height:23px;color:#fff;font-weight:700;left:537.5px;transform:translateX(-50%);letter-spacing:0.386px;margin-left:0.193px;">Value</span>
<span style="top:328.9px;font-size:19px;line-height:23px;color:#fff;font-weight:700;left:1008.5px;transform:translateX(-50%);letter-spacing:0.117px;margin-left:0.058px;">Description</span>
<span style="top:415.5px;font-size:19px;line-height:23px;color:#000000;right:1441px;letter-spacing:0.259px;margin-right:-0.259px;">89</span>
<span style="top:560.5px;font-size:19px;line-height:23px;color:#000000;right:1441px;letter-spacing:0.259px;margin-right:-0.259px;">70</span>
<span style="top:589.5px;font-size:19px;line-height:23px;color:#000000;right:1441px;font-size:18.92px;top:589.5px;letter-spacing:-0.250px;margin-right:0.250px;">71</span>
<span style="top:618.5px;font-size:19px;line-height:23px;color:#000000;right:1441px;letter-spacing:0.498px;margin-right:-0.498px;">107</span>
<span style="top:1256.5px;font-size:19px;line-height:23px;color:#000000;right:1441px;letter-spacing:0.259px;margin-right:-0.259px;">53</span>
<span style="top:1285.5px;font-size:19px;line-height:23px;color:#000000;right:1441px;letter-spacing:0.259px;margin-right:-0.259px;">54</span>
<span style="top:1314.5px;font-size:19px;line-height:23px;color:#000000;right:1441px;letter-spacing:0.259px;margin-right:-0.259px;">55</span>
<span style="top:1343.5px;font-size:19px;line-height:23px;color:#000000;right:1441px;letter-spacing:0.259px;margin-right:-0.259px;">56</span>
<span style="top:1372.5px;font-size:19px;line-height:23px;color:#000000;right:1441px;letter-spacing:1.868px;margin-right:-1.868px;">3</span>
<span style="top:357.5px;font-size:19px;line-height:23px;color:#000000;left:97.8px;letter-spacing:1.150px;">ToolName</span>
<span style="top:386.5px;font-size:19px;line-height:23px;color:#000000;left:97.8px;letter-spacing:0.977px;">ToolVersion</span>
<span style="top:502.5px;font-size:19px;line-height:23px;color:#000000;left:97.8px;letter-spacing:1.027px;">AdminUser</span>
<span style="top:560.5px;font-size:19px;line-height:23px;color:#000000;left:97.8px;letter-spacing:0.654px;">Selected-Country</span>
<span style="top:589.5px;font-size:19px;line-height:23px;color:#000000;left:97.8px;letter-spacing:0.486px;">Selected-Year</span>
<span style="top:618.5px;font-size:19px;line-height:23px;color:#000000;left:97.8px;letter-spacing:0.833px;">Selected-ImportType</span>
<span style="top:647.5px;font-size:19px;line-height:23px;color:#000000;left:97.8px;font-size:18.70px;top:647.5px;letter-spacing:-0.250px;">SepaC</span>
<span style="top:676.5px;font-size:19px;line-height:23px;color:#000000;left:97.8px;font-size:18.70px;top:676.5px;letter-spacing:-0.250px;">SepaR</span>
<span style="top:734.5px;font-size:19px;line-height:23px;color:#000000;left:97.8px;letter-spacing:0.850px;">UI_Text_Empty_Default</span>
<span style="top:792.5px;font-size:19px;line-height:23px;color:#000000;left:97.8px;letter-spacing:0.882px;">App_Year1</span>
<span style="top:821.5px;font-size:19px;line-height:23px;color:#000000;left:97.8px;letter-spacing:0.882px;">App_Year2</span>
<span style="top:850.5px;font-size:19px;line-height:23px;color:#000000;left:97.8px;letter-spacing:0.882px;">App_Year3</span>
<span style="top:879.5px;font-size:19px;line-height:23px;color:#000000;left:97.8px;letter-spacing:0.882px;">App_Year4</span>
<span style="top:908.5px;font-size:19px;line-height:23px;color:#000000;left:97.8px;letter-spacing:0.882px;">App_Year5</span>
<span style="top:937.5px;font-size:19px;line-height:23px;color:#000000;left:97.8px;letter-spacing:0.882px;">App_Year6</span>
<span style="top:1082.5px;font-size:19px;line-height:23px;color:#000000;left:97.8px;letter-spacing:0.618px;">DeptSummary_CostCenters</span>
<span style="top:1198.5px;font-size:19px;line-height:23px;color:#000000;left:97.8px;letter-spacing:0.207px;">CC_Column_DB2</span>
<span style="top:1256.5px;font-size:19px;line-height:23px;color:#000000;left:97.8px;letter-spacing:0.894px;">Tmpt1-Caption</span>
<span style="top:1285.5px;font-size:19px;line-height:23px;color:#000000;left:97.8px;letter-spacing:0.859px;">Tmpt1-ID</span>
<span style="top:1314.5px;font-size:19px;line-height:23px;color:#000000;left:97.8px;letter-spacing:1.009px;">Tmpt1-4Country</span>
<span style="top:1343.5px;font-size:19px;line-height:23px;color:#000000;left:97.8px;letter-spacing:0.923px;">Tmpt1-4Date</span>
<span style="top:1372.5px;font-size:19px;line-height:23px;color:#000000;left:97.8px;letter-spacing:1.133px;">Tmpt1-Imp-DateImported</span>
<span style="top:415.5px;font-size:19px;line-height:23px;color:#000000;left:97.8px;letter-spacing:1.537px;">Dummy</span>
<span style="top:444.5px;font-size:19px;line-height:23px;color:#000000;left:97.8px;letter-spacing:1.537px;">Dummy</span>
<span style="top:473.5px;font-size:19px;line-height:23px;color:#000000;left:97.8px;letter-spacing:1.537px;">Dummy</span>
<span style="top:531.5px;font-size:19px;line-height:23px;color:#000000;left:97.8px;letter-spacing:1.537px;">Dummy</span>
<span style="top:705.5px;font-size:19px;line-height:23px;color:#000000;left:97.8px;letter-spacing:1.537px;">Dummy</span>
<span style="top:763.5px;font-size:19px;line-height:23px;color:#000000;left:97.8px;letter-spacing:1.537px;">Dummy</span>
<span style="top:966.5px;font-size:19px;line-height:23px;color:#000000;left:97.8px;letter-spacing:1.537px;">Dummy</span>
<span style="top:995.5px;font-size:19px;line-height:23px;color:#000000;left:97.8px;letter-spacing:1.537px;">Dummy</span>
<span style="top:1024.5px;font-size:19px;line-height:23px;color:#000000;left:97.8px;letter-spacing:1.537px;">Dummy</span>
<span style="top:1053.5px;font-size:19px;line-height:23px;color:#000000;left:97.8px;letter-spacing:1.537px;">Dummy</span>
<span style="top:1111.5px;font-size:19px;line-height:23px;color:#000000;left:97.8px;letter-spacing:1.537px;">Dummy</span>
<span style="top:1140.5px;font-size:19px;line-height:23px;color:#000000;left:97.8px;letter-spacing:1.537px;">Dummy</span>
<span style="top:1169.5px;font-size:19px;line-height:23px;color:#000000;left:97.8px;letter-spacing:1.537px;">Dummy</span>
<span style="top:1227.5px;font-size:19px;line-height:23px;color:#000000;left:97.8px;letter-spacing:1.537px;">Dummy</span>
<span style="top:357.5px;font-size:19px;line-height:23px;color:#000000;left:352.8px;letter-spacing:0.913px;">ArthrexPayroll</span>
<span style="top:386.5px;font-size:19px;line-height:23px;color:#000000;left:352.8px;letter-spacing:0.629px;">v1.21</span>
<span style="top:502.5px;font-size:19px;line-height:23px;color:#000000;left:352.8px;letter-spacing:1.257px;">Administrator</span>
<span style="top:560.5px;font-size:19px;line-height:23px;color:#000000;left:352.8px;font-size:18.87px;top:560.5px;letter-spacing:-0.250px;">MEXICO</span>
<span style="top:589.5px;font-size:19px;line-height:23px;color:#000000;left:352.8px;letter-spacing:0.406px;">2017</span>
<span style="top:618.5px;font-size:19px;line-height:23px;color:#000000;left:352.8px;letter-spacing:0.048px;">101</span>
<span style="top:647.5px;font-size:19px;line-height:23px;color:#000000;left:352.8px;letter-spacing:0.292px;">{{$C$}}</span>
<span style="top:676.5px;font-size:19px;line-height:23px;color:#000000;left:352.8px;letter-spacing:0.292px;">{{$R$}}</span>
<span style="top:734.5px;font-size:19px;line-height:23px;color:#000000;left:352.8px;letter-spacing:0.663px;">Please browse to a file!</span>
<span style="top:792.5px;font-size:19px;line-height:23px;color:#000000;left:352.8px;letter-spacing:0.406px;">2017</span>
<span style="top:821.5px;font-size:19px;line-height:23px;color:#000000;left:352.8px;letter-spacing:0.406px;">2018</span>
<span style="top:850.5px;font-size:19px;line-height:23px;color:#000000;left:352.8px;letter-spacing:0.406px;">2019</span>
<span style="top:879.5px;font-size:19px;line-height:23px;color:#000000;left:352.8px;letter-spacing:0.406px;">2020</span>
<span style="top:908.5px;font-size:19px;line-height:23px;color:#000000;left:352.8px;letter-spacing:0.406px;">2021</span>
<span style="top:937.5px;font-size:19px;line-height:23px;color:#000000;left:352.8px;letter-spacing:0.406px;">2022</span>
<span style="top:1198.5px;font-size:19px;line-height:23px;color:#000000;left:352.8px;font-size:18.14px;top:1199.5px;letter-spacing:-0.518px;">CA</span>
<span style="top:1256.5px;font-size:19px;line-height:23px;color:#000000;left:352.8px;letter-spacing:1.067px;">Acumulado</span>
<span style="top:1285.5px;font-size:19px;line-height:23px;color:#000000;left:352.8px;letter-spacing:1.868px;">1</span>
<span style="top:1314.5px;font-size:19px;line-height:23px;color:#000000;left:352.8px;letter-spacing:0.377px;">Brazil</span>
<span style="top:1343.5px;font-size:19px;line-height:23px;color:#000000;left:352.8px;letter-spacing:1.082px;">2018-Mar</span>
<span style="top:1372.5px;font-size:19px;line-height:23px;color:#000000;left:352.8px;letter-spacing:0.854px;">4/9/2018 12:14</span>
<span style="top:1082.5px;font-size:19px;line-height:23px;color:#000000;left:353.20000000000005px;letter-spacing:1.097px;">Marketing</span>
<span style="top:1082.5px;font-size:19px;line-height:23px;color:#000000;left:444.8px;letter-spacing:0.475px;">{{$C$}}</span>
<span style="top:1082.5px;font-size:19px;line-height:23px;color:#000000;left:507.90000000000003px;letter-spacing:0.690px;">Medical Education</span>
<span style="top:1082.5px;font-size:19px;line-height:23px;color:#000000;left:673.9px;letter-spacing:0.525px;">{{$C$}}</span>
<span style="top:1082.5px;font-size:19px;line-height:23px;color:#000000;left:737.3000000000001px;letter-spacing:0.398px;">Finance</span>
<span style="top:1082.5px;font-size:19px;line-height:23px;color:#000000;left:806.6px;letter-spacing:0.325px;">{{$C$}}</span>
<span style="top:1082.5px;font-size:19px;line-height:23px;color:#000000;left:871.1px;letter-spacing:0.966px;">Warehouse</span>
<span style="top:1082.5px;font-size:19px;line-height:23px;color:#000000;left:974.6px;letter-spacing:0.408px;">{{$C$}}</span>
<span style="top:1082.5px;font-size:19px;line-height:23px;color:#000000;left:1039.1px;letter-spacing:0.262px;">Customer Services</span>
<span style="top:1082.5px;font-size:19px;line-height:23px;color:#000000;left:1203.1px;letter-spacing:0.492px;">{{$C$}}</span>
<span style="top:1082.5px;font-size:19px;line-height:23px;color:#000000;left:1267.3px;font-size:18.39px;top:1082.5px;letter-spacing:-0.250px;">Sales</span>
<span style="top:1082.5px;font-size:19px;line-height:23px;color:#000000;left:1312.1px;letter-spacing:0.492px;">{{$C$}}</span>
<span style="top:1082.5px;font-size:19px;line-height:23px;color:#000000;left:1375.0px;letter-spacing:0.305px;">Planning &amp; Logisti</span>
<span style="top:1082.5px;font-size:19px;line-height:23px;color:#000000;left:1532.1px;">cs</span>
<span style="top:560.5px;font-size:19px;line-height:23px;color:#000000;left:729.8px;letter-spacing:0.646px;">Leave at row 9 (by tool)</span>
<span style="top:589.5px;font-size:19px;line-height:23px;color:#000000;left:729.8px;letter-spacing:0.657px;">Leave at row 10 (by tool)</span>
<span style="top:618.5px;font-size:19px;line-height:23px;color:#000000;left:729.8px;letter-spacing:0.773px;">1,2 or 3 = current import type (by tol only)</span>
<span style="top:792.5px;font-size:19px;line-height:23px;color:#000000;left:729.8px;letter-spacing:1.234px;">formulas</span>
<span style="top:1198.5px;font-size:19px;line-height:23px;color:#000000;left:729.8px;letter-spacing:0.570px;">Column to fill in CostCenters in DB2 for each ee</span>
<span style="top:1343.5px;font-size:19px;line-height:23px;color:#000000;left:729.8px;letter-spacing:0.768px;">From where should we get the date in that source file</span>
<span style="top:1314.5px;font-size:19px;line-height:23px;color:#000000;left:729.5px;letter-spacing:0.839px;width:559px;overflow:hidden;">From where should we get the country name in that source file</span>
<span style="top:1314.5px;font-size:19px;line-height:23px;color:#000000;left:1292.8px;letter-spacing:0.667px;">Parametros!$B$2</span>
<span style="top:1343.5px;font-size:19px;line-height:23px;color:#000000;left:1292.8px;letter-spacing:0.324px;">Parametros!$B$7{{$C$}}Pa</span>
</div></body></html>
